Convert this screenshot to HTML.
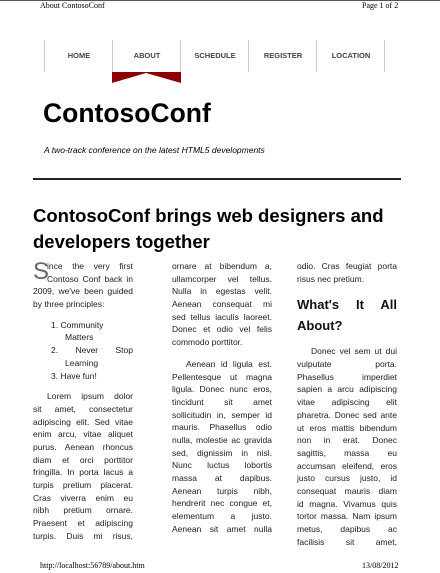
<!DOCTYPE html>
<html><head><meta charset="utf-8"><style>
*{margin:0;padding:0}
body{width:440px;height:573px;background:#fff;position:relative;overflow:hidden;font-family:"Liberation Sans",sans-serif;color:#111}
.a{position:absolute}
.hdr{font-family:"Liberation Serif",serif;font-size:8px;color:#000}
.nav{top:40px;height:32px;width:68px;border-left:1px solid #ccc;font-size:7.5px;font-weight:bold;color:#444;text-align:center;line-height:32px}
.col{position:absolute;width:100px;font-size:8.5px;line-height:12.7px;color:#222}
.col div{text-align:justify;text-align-last:justify;white-space:nowrap;height:12.7px}
.col div.l{text-align-last:left}
.col div.i{padding-left:14px}
</style></head><body>
<div class="a" style="top:0;left:0;width:440px;height:1px;background:#555"></div>
<div class="a hdr" style="top:1px;left:40px">About ContosoConf</div>
<div class="a hdr" style="top:1px;left:362px">Page 1 of 2</div>

<div class="a nav" style="left:44px">HOME</div>
<div class="a nav" style="left:112px">ABOUT</div>
<div class="a nav" style="left:180px">SCHEDULE</div>
<div class="a nav" style="left:248px">REGISTER</div>
<div class="a nav" style="left:316px;">LOCATION</div>
<div class="a" style="left:384px;top:40px;height:32px;border-left:1px solid #ccc"></div>
<svg class="a" style="left:112px;top:72px" width="69" height="11"><polygon points="0,0 69,0 69,11 34,1 0,11" fill="#8b0000"/></svg>

<div class="a" style="top:98px;left:43px;font-size:26.5px;font-weight:bold;color:#000">ContosoConf</div>
<div class="a" style="top:145px;left:44px;font-size:8.5px;font-style:italic;color:#000">A two-track conference on the latest HTML5 developments</div>
<div class="a" style="top:178px;left:33px;width:368px;height:2px;background:#222"></div>
<div class="a" style="top:203px;left:33px;width:380px;font-size:18.5px;font-weight:bold;line-height:26px;color:#000">ContosoConf brings web designers and developers together</div>

<div class="col" style="left:33px;top:260px">
<div class="a" style="left:0;top:-1px;font-size:24px;color:#666;line-height:26px">S</div>
<div style="padding-left:14px">ince the very first</div>
<div style="padding-left:14px">Contoso Conf back in</div>
<div>2009, we've been guided</div>
<div class="l">by three principles:</div>
<div style="height:8px"></div>
<div class="l" style="padding-left:18px">1. Community</div>
<div class="l" style="padding-left:32px">Matters</div>
<div style="padding-left:18px">2. Never Stop</div>
<div class="l" style="padding-left:32px">Learning</div>
<div class="l" style="padding-left:18px">3. Have fun!</div>
<div style="height:8px"></div>
<div class="i">Lorem ipsum dolor</div>
<div>sit amet, consectetur</div>
<div>adipiscing elit. Sed vitae</div>
<div>enim arcu, vitae aliquet</div>
<div>purus. Aenean rhoncus</div>
<div>diam et orci porttitor</div>
<div>fringilla. In porta lacus a</div>
<div>turpis pretium placerat.</div>
<div>Cras viverra enim eu</div>
<div>nibh pretium ornare.</div>
<div>Praesent et adipiscing</div>
<div>turpis. Duis mi risus,</div>
</div>

<div class="col" style="left:172px;top:260px">
<div>ornare at bibendum a,</div>
<div>ullamcorper vel tellus.</div>
<div>Nulla in egestas velit.</div>
<div>Aenean consequat mi</div>
<div>sed tellus iaculis laoreet.</div>
<div>Donec et odio vel felis</div>
<div class="l">commodo porttitor.</div>
<div style="height:9px"></div>
<div class="i">Aenean id ligula est.</div>
<div>Pellentesque ut magna</div>
<div>ligula. Donec nunc eros,</div>
<div>tincidunt sit amet</div>
<div>sollicitudin in, semper id</div>
<div>mauris. Phasellus odio</div>
<div>nulla, molestie ac gravida</div>
<div>sed, dignissim in nisl.</div>
<div>Nunc luctus lobortis</div>
<div>massa at dapibus.</div>
<div>Aenean turpis nibh,</div>
<div>hendrerit nec congue et,</div>
<div>elementum a justo.</div>
<div>Aenean sit amet nulla</div>
</div>

<div class="col" style="left:297px;top:260px">
<div>odio. Cras feugiat porta</div>
<div class="l">risus nec pretium.</div>
<div style="height:9px"></div>
<div style="font-size:13px;font-weight:bold;height:21px;line-height:21px;color:#111">What's It All</div>
<div class="l" style="font-size:13px;font-weight:bold;height:21px;line-height:21px;color:#111">About?</div>
<div style="height:9px"></div>
<div class="i">Donec vel sem ut dui</div>
<div>vulputate porta.</div>
<div>Phasellus imperdiet</div>
<div>sapien a arcu adipiscing</div>
<div>vitae adipiscing elit</div>
<div>pharetra. Donec sed ante</div>
<div>ut eros mattis bibendum</div>
<div>non in erat. Donec</div>
<div>sagittis, massa eu</div>
<div>accumsan eleifend, eros</div>
<div>justo cursus justo, id</div>
<div>consequat mauris diam</div>
<div>id magna. Vivamus quis</div>
<div>tortor massa. Nam ipsum</div>
<div>metus, dapibus ac</div>
<div>facilisis sit amet,</div>
</div>

<div class="a hdr" style="top:561px;left:40px">http://localhost:56789/about.htm</div>
<div class="a hdr" style="top:561px;left:362px">13/08/2012</div>
</body></html>
